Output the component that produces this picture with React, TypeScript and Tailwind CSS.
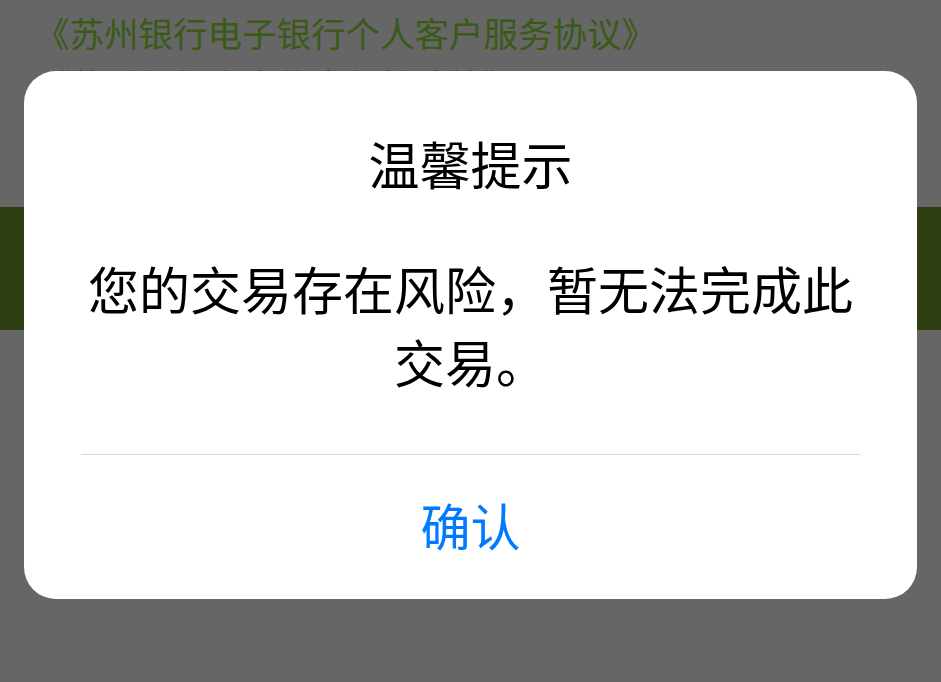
import { useState } from "react"

const font = { fontFamily: '"Noto Sans CJK SC", "Noto Sans", sans-serif' }

export default function App() {
  const [open, setOpen] = useState(true)

  return (
    <div className="relative h-[682px] w-full overflow-hidden bg-white" style={font}>
      {/* 底层页面 */}
      <div className="pt-[6px] pl-[35px] text-[34.5px] leading-[52px] text-[#92e23e]">
        <div>《苏州银行电子银行个人客户服务协议》</div>
        <div>《苏州银行个人信息保护政策》</div>
      </div>
      <div className="mt-[97px] h-[123px] w-full bg-[#719e28]" />

      {open && (
        <div className="absolute inset-0 bg-black/60">
          <div className="mx-[24px] mt-[71px] rounded-[32px] bg-white px-[57px]">
            <div className="pt-[56px] text-center text-[51px] leading-[73px] font-normal text-black">
              温馨提示
            </div>
            <div className="mt-[52px] pb-[56px] text-center text-[51px] leading-[73px] text-black">
              您的交易存在风险，暂无法完成此交易。
            </div>
            <div className="h-px bg-[#d9d9d9]" />
            <button
              onClick={() => setOpen(false)}
              className="flex h-[144px] w-full items-center justify-center pb-[6px] text-[50px] text-[#007aff]"
            >
              确认
            </button>
          </div>
        </div>
      )}
    </div>
  )
}
